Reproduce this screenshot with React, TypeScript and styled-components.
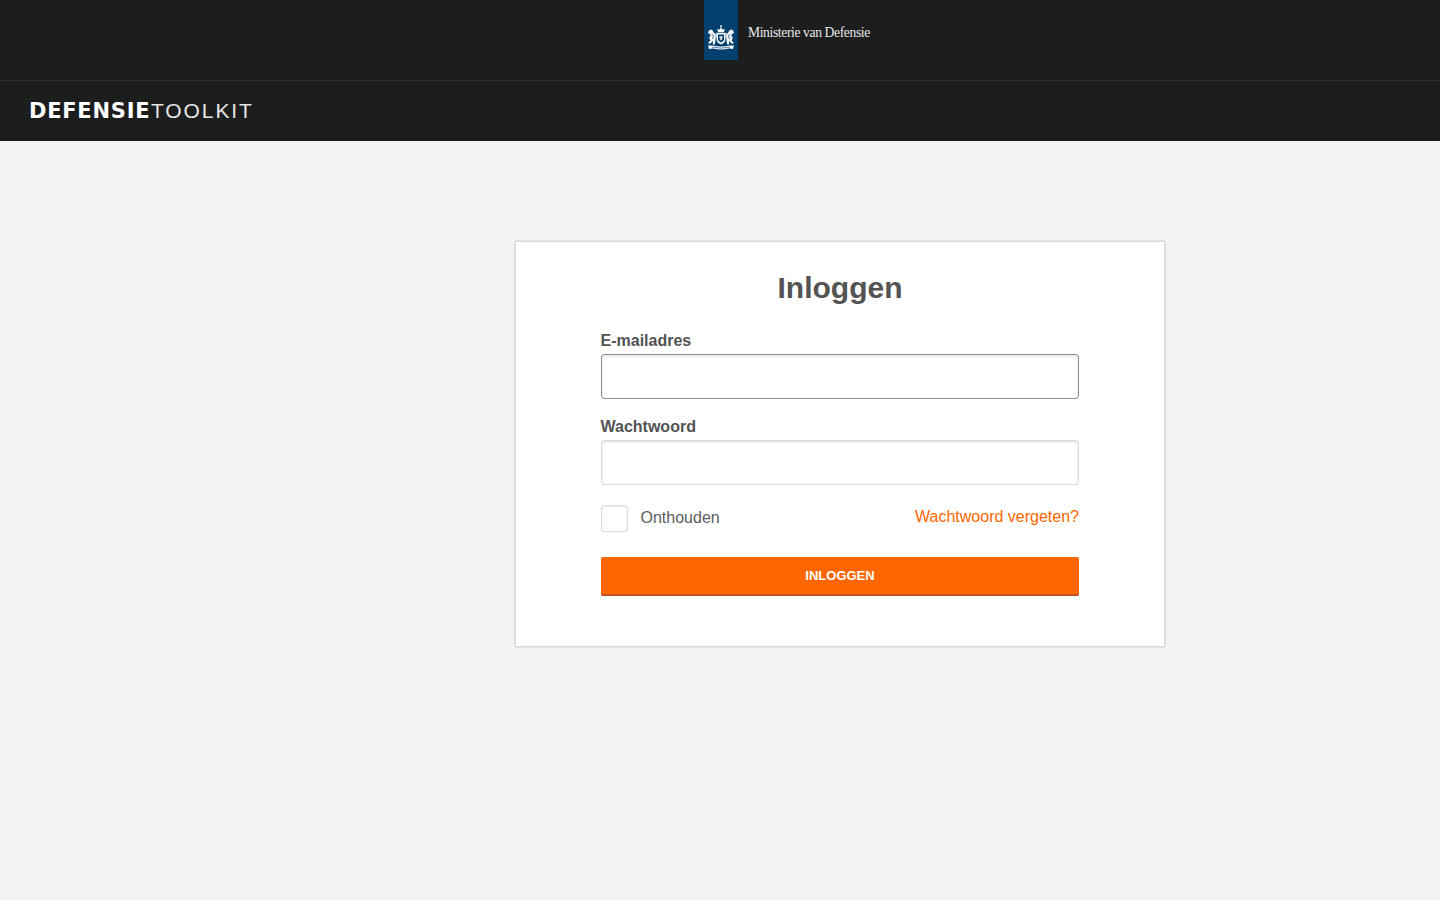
import React from "react";
import styled, { createGlobalStyle } from "styled-components";

const GlobalStyle = createGlobalStyle`
  html, body {
    margin: 0;
    padding: 0;
    min-height: 100%;
    background: #f3f3f3;
  }
  body {
    font-family: "Liberation Sans", Arial, sans-serif;
    color: #535353;
  }
  * {
    box-sizing: border-box;
  }
`;

const Page = styled.div`
  min-height: 900px;
  display: flex;
  flex-direction: column;
`;

const TopBar = styled.header`
  height: 81px;
  background: #1c1e1d;
  border-bottom: 1px solid #2e302f;
  padding-left: 704px;
  display: flex;
  align-items: flex-start;
`;

const Flag = styled.div`
  width: 34px;
  height: 60px;
  background: #03406f;
  display: flex;
  justify-content: center;
  padding-top: 25px;
`;

const Ministry = styled.div`
  margin: 24px 0 0 10px;
  font-family: "Liberation Serif", "Times New Roman", serif;
  font-size: 13.6px;
  line-height: 17px;
  letter-spacing: -0.38px;
  color: #e8e8e8;
  white-space: nowrap;
`;

const NavBar = styled.nav`
  height: 60px;
  background: #1c1e1d;
  padding: 18px 0 0 30px;
`;

const Brand = styled.div`
  font-size: 21px;
  line-height: 24px;
  color: #ffffff;
  white-space: nowrap;
  display: flex;
`;

const BrandBold = styled.span`
  font-family: "DejaVu Sans", sans-serif;
  font-weight: 700;
  letter-spacing: 0.75px;
  margin-left: -1px;
  width: 122px;
`;

const BrandLight = styled.span`
  font-family: "Liberation Sans", sans-serif;
  font-weight: 400;
  letter-spacing: 1.9px;
  color: #e6e6e6;
`;

const Main = styled.main`
  flex: 1;
  padding: 100px 0 0 515px;
`;

const Card = styled.section`
  width: 650px;
  height: 406px;
  background: #ffffff;
  border: 1px solid #d8d8d8;
  box-shadow: 0 0 2px rgba(0, 0, 0, 0.16);
  padding: 29px 85px 0;
`;

const Title = styled.h1`
  margin: 0 0 25px;
  font-size: 30px;
  line-height: 34px;
  font-weight: 700;
  text-align: center;
  color: #535353;
`;

const Field = styled.div`
  margin-bottom: 17px;
`;

const Label = styled.label`
  display: block;
  margin: 0 0 2px -0.5px;
  font-size: 16px;
  line-height: 22px;
  font-weight: 700;
  color: #535353;
`;

const Input = styled.input<{ $focused?: boolean }>`
  display: block;
  width: 100%;
  height: 45px;
  background: #ffffff;
  border-radius: 3px;
  outline: none;
  padding: 0 10px;
  font-size: 16px;
  border: 1px solid ${(p) => (p.$focused ? "#8f8f8f" : "#dadada")};
  box-shadow: inset 0 1px 3px rgba(0, 0, 0, 0.12);
`;

const OptionsRow = styled.div`
  display: flex;
  justify-content: space-between;
  align-items: center;
  height: 28px;
  margin: 19px 0 25px;
`;

const Remember = styled.label`
  display: flex;
  align-items: center;
  gap: 12.5px;
  font-size: 16px;
  color: #5c5c5c;
`;

const CheckBox = styled.span`
  width: 27px;
  height: 27px;
  background: #ffffff;
  border: 1px solid #dadada;
  border-radius: 3px;
  box-shadow: inset 0 1px 2px rgba(0, 0, 0, 0.1);
`;

const ForgotLink = styled.a`
  position: relative;
  top: -1px;
  font-size: 16px;
  color: #ff6600;
  text-decoration: none;
`;

const Submit = styled.button`
  display: block;
  width: 100%;
  height: 39px;
  background: #ff6600;
  border: none;
  border-bottom: 2px solid #c2501a;
  border-radius: 2px;
  color: #ffffff;
  font-family: "Liberation Sans", Arial, sans-serif;
  font-size: 13px;
  font-weight: 700;
  padding: 0;
`;

function Crest() {
  return (
    <svg width="28" height="26" viewBox="0 0 28 26" fill="#f4f7fa">
      {/* crown */}
      <path d="M11 7 L10.2 3.8 L12.2 4.8 L14 2.2 L15.8 4.8 L17.8 3.8 L17 7 Z" />
      <circle cx="14" cy="1.2" r="1" />
      {/* mantle behind the shield */}
      <path d="M8 8 Q14 6.4 20 8 L20 13 L8 13 Z" fillOpacity="0.55" />
      {/* shield */}
      <path d="M9.6 8 H18.4 V14.5 Q18.4 18 14 19.4 Q9.6 18 9.6 14.5 Z" />
      <path d="M11 9.5 H17 V14.2 Q17 16.6 14 17.6 Q11 16.6 11 14.2 Z" fill="#03406f" />
      <path d="M12.4 11 L15.6 11 L15.2 14.4 L14 15.6 L12.8 14.4 Z" fillOpacity="0.8" />
      {/* lions */}
      <path d="M1.6 6 L3.4 4.6 L5.4 5 L6.8 7.6 L8.6 9.4 L8.6 15 L7.8 19.4 L5.8 19.4 L6 16 L4.4 17.6 L2.4 19 L1.2 17.8 L3.4 15.4 L2 12.6 L3.4 11.4 L3.2 9 L1 8.2 Z" />
      <path d="M26.4 6 L24.6 4.6 L22.6 5 L21.2 7.6 L19.4 9.4 L19.4 15 L20.2 19.4 L22.2 19.4 L22 16 L23.6 17.6 L25.6 19 L26.8 17.8 L24.6 15.4 L26 12.6 L24.6 11.4 L24.8 9 L27 8.2 Z" />
      <path d="M4.6 9 L6.6 11 L5.4 14" fill="none" stroke="#03406f" strokeWidth="0.7" />
      <path d="M23.4 9 L21.4 11 L22.6 14" fill="none" stroke="#03406f" strokeWidth="0.7" />
      {/* motto ribbon */}
      <path d="M1 20.4 L5 20.6 Q14 22.4 23 20.6 L27 20.4 L26 24 L22 23.6 Q14 25.4 6 23.6 L2 24 Z" />
      <path d="M5 22.2 Q14 24 23 22.2" fill="none" stroke="#03406f" strokeWidth="0.6" />
    </svg>
  );
}

export default function App() {
  return (
    <Page>
      <GlobalStyle />
      <TopBar>
        <Flag>
          <Crest />
        </Flag>
        <Ministry>Ministerie van Defensie</Ministry>
      </TopBar>
      <NavBar>
        <Brand>
          <BrandBold>DEFENSIE</BrandBold>
          <BrandLight>TOOLKIT</BrandLight>
        </Brand>
      </NavBar>
      <Main>
        <Card>
          <Title>Inloggen</Title>
          <Field>
            <Label htmlFor="email">E-mailadres</Label>
            <Input id="email" type="email" $focused />
          </Field>
          <Field>
            <Label htmlFor="password">Wachtwoord</Label>
            <Input id="password" type="password" />
          </Field>
          <OptionsRow>
            <Remember>
              <CheckBox />
              Onthouden
            </Remember>
            <ForgotLink href="#">Wachtwoord vergeten?</ForgotLink>
          </OptionsRow>
          <Submit type="button">INLOGGEN</Submit>
        </Card>
      </Main>
    </Page>
  );
}
